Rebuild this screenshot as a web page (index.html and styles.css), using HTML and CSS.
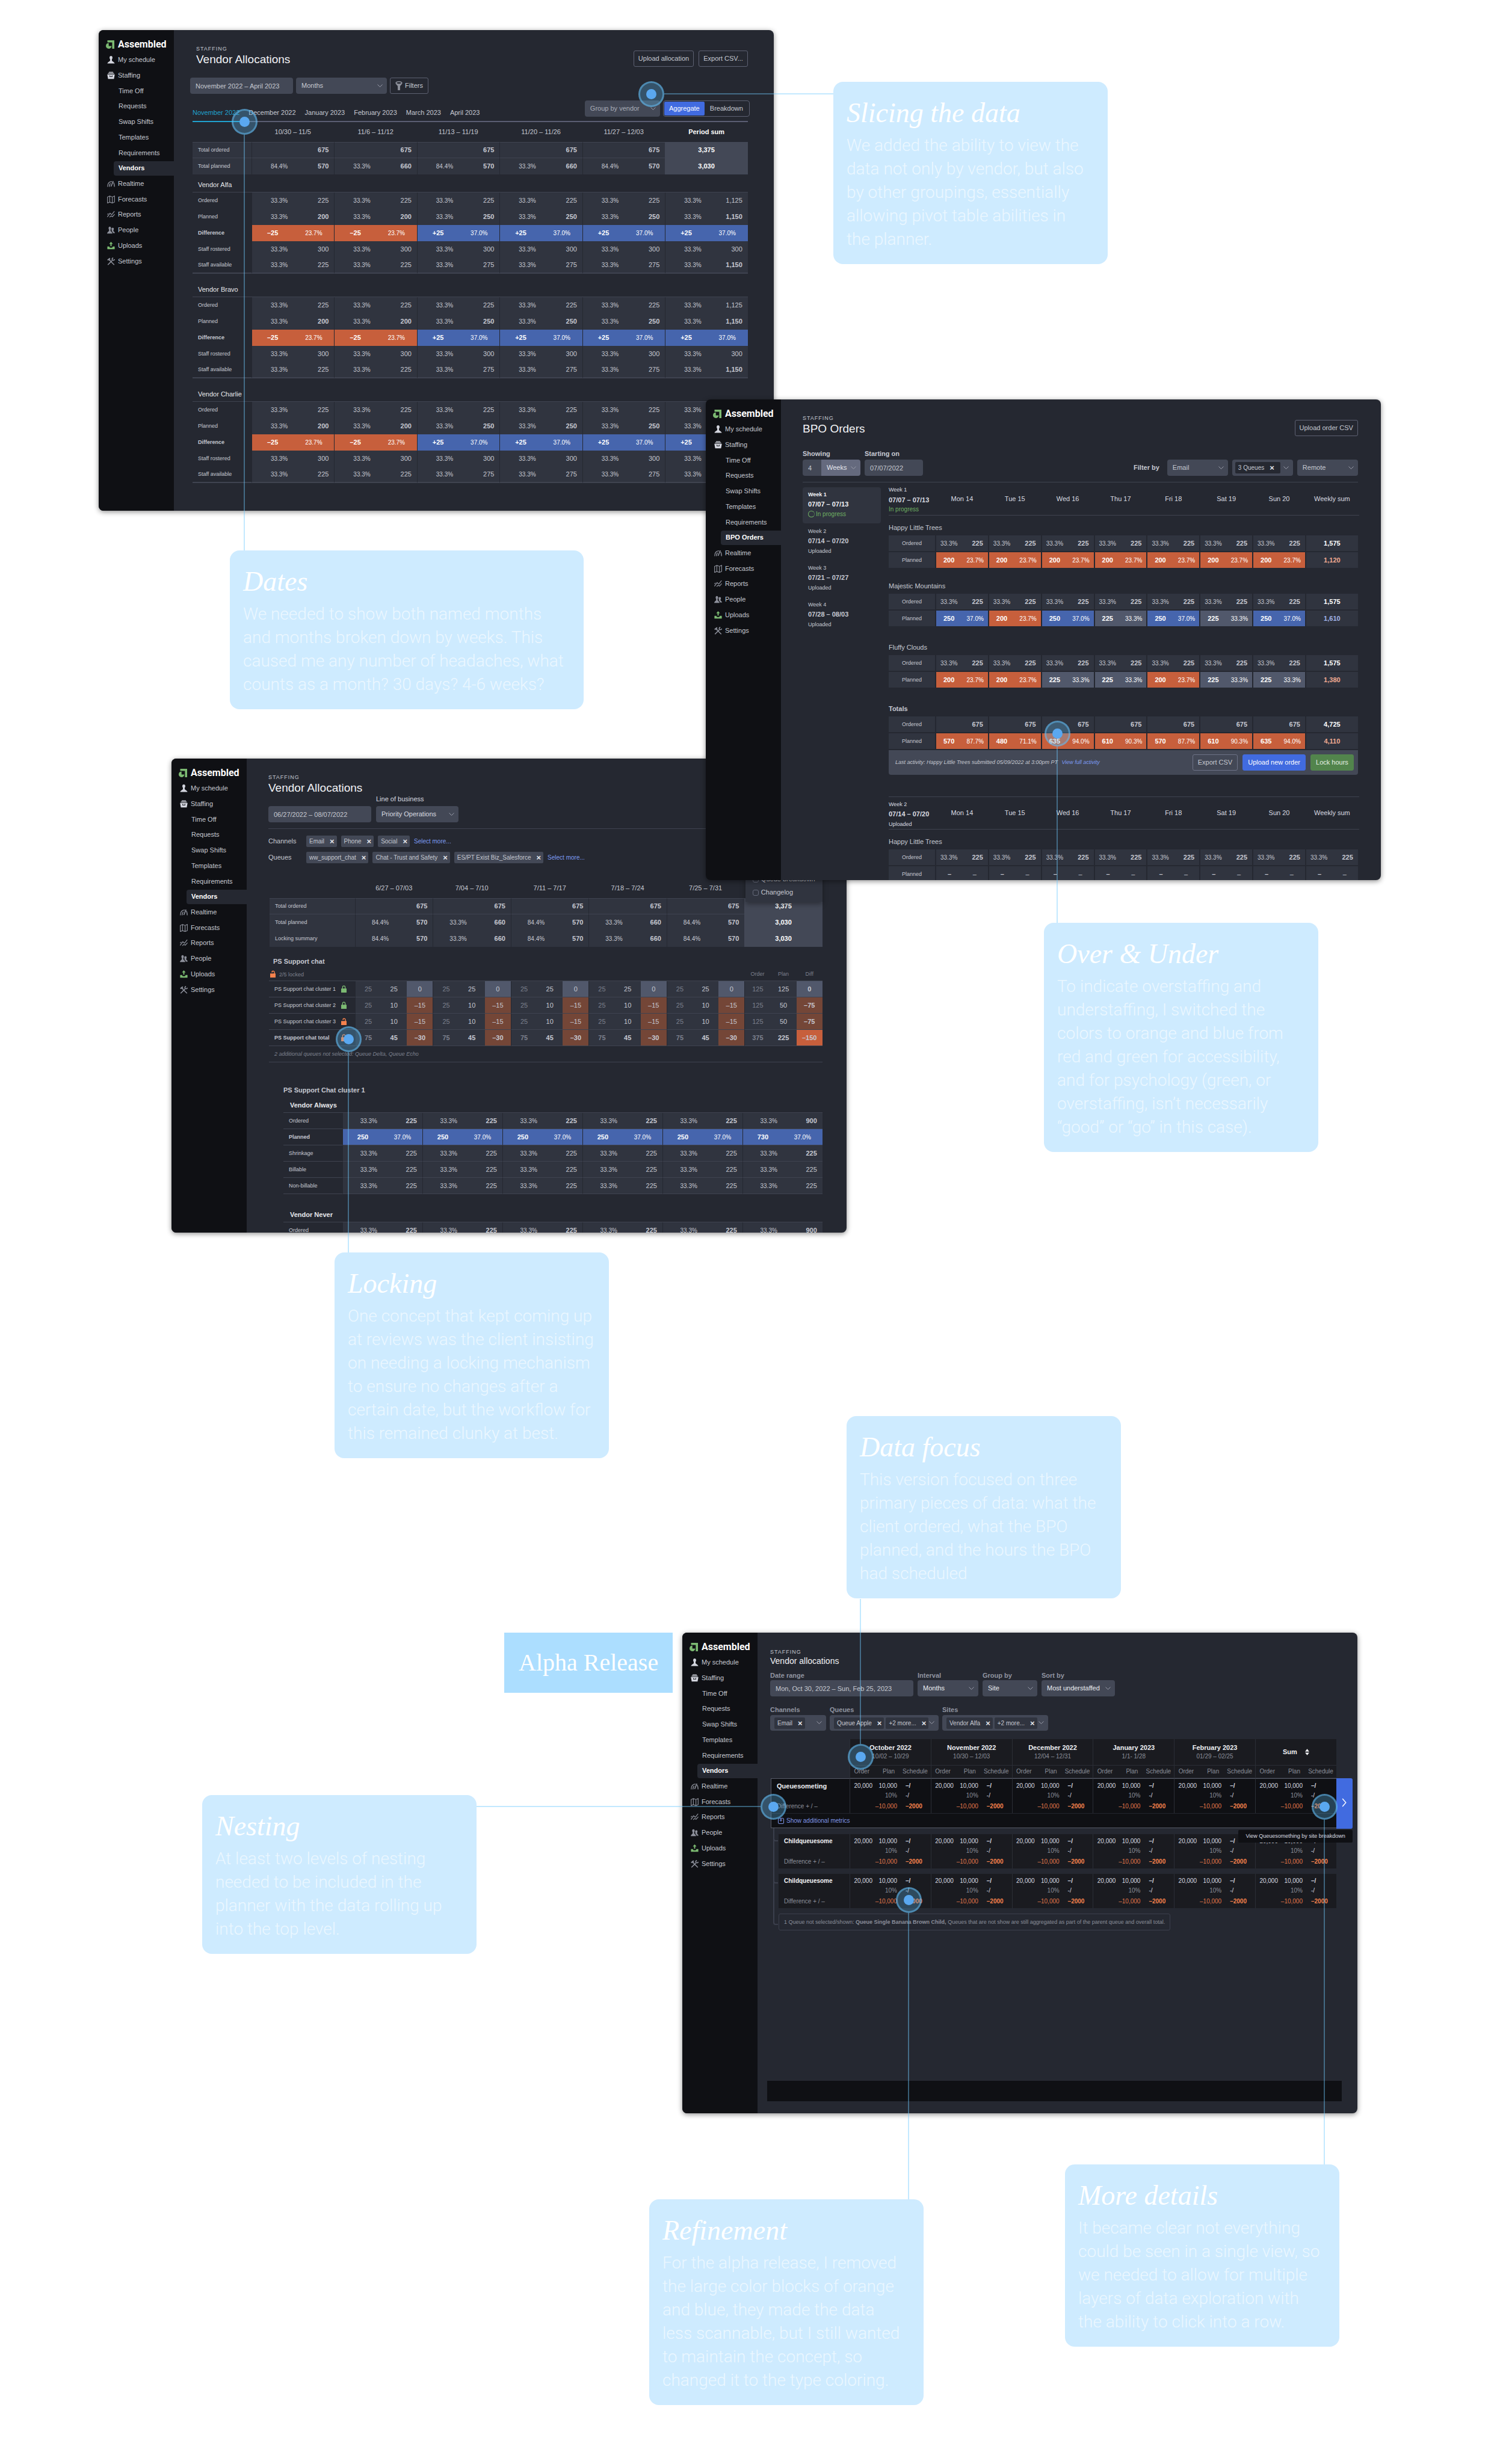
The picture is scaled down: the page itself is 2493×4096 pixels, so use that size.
FILE: index.html
```html
<!DOCTYPE html>
<html lang="en">
<head>
<meta charset="utf-8">
<title>Vendor allocations – design notes</title>
<link rel="stylesheet" href="styles.css">
</head>
<body>
<svg class="sprite" aria-hidden="true">
  <symbol id="logo" viewBox="0 0 14 14"><path d="M2.500 0H14v14h-3.600V3.600H2.500z"/><path d="M0 9.300A5 5 0 0 1 4.700 4.600V9.500h4.700a4.700 4.600 0 0 1-9.400-.2z"/></symbol>
  <symbol id="person" viewBox="0 0 16 16"><path d="M8 0C6 0 5 1.600 5 3.500c0 1.600.5 2.600 1.200 3.300V9c0 2.400-4.500 3-5.700 6.500h15C14.300 12 9.800 11.400 9.800 9V6.800C10.500 6.100 11 5.100 11 3.500 11 1.600 10 0 8 0z"/></symbol>
  <symbol id="box" viewBox="0 0 16 16"><path d="M4 .5h8l.8 1.500H3.200zM2.300 3h11.400l.8 1.700h-13z"/><path fill-rule="evenodd" d="M.3 5.700h15.400L14 15H2zM5 8v2.800h6V8H9.800v1.600H6.200V8z"/></symbol>
  <symbol id="gauge" viewBox="0 0 16 16"><g fill="none" stroke="currentColor" stroke-width="1.600"><path d="M1 14C1 8 3.500 3.500 10 3.200M13 5.500c1.600 2 2 4.500 2 8.500M4.500 14c0-3 .7-5.200 2.500-7"/><path d="M8 13.500 12.500 2.500" stroke-width="2"/></g></symbol>
  <symbol id="map" viewBox="0 0 16 16"><path fill="none" stroke="currentColor" stroke-width="1.400" d="M.8 3 5.400 1l5.200 2 4.600-2v12.500l-4.600 2-5.200-2-4.600 2zM5.400 1v12.500M10.600 3v12.500"/></symbol>
  <symbol id="chart" viewBox="0 0 16 16"><path fill="none" stroke="currentColor" stroke-width="1.500" d="M.5 13 6 5.500l3.500 3L15 1.500M.5 8 3 6M5 13.500l3-2.500 3 1.500 4.500-5"/></symbol>
  <symbol id="people" viewBox="0 0 16 16"><path d="M5.500 1C3.900 1 3 2.300 3 4c0 1.400.4 2.300 1 3v2c0 2-3.400 2.500-4 6h11c-.6-3.500-4-4-4-6V7c.6-.7 1-1.600 1-3 0-1.700-.9-3-2.500-3zM11.500 3c1.500 0 2.300 1 2.300 2.500 0 1.200-.4 2-.9 2.600v1.500c0 1.400 2.700 2 3.100 4.400h-3.800c-.6-2-1.800-3-2.700-4V8c-.3-.6-.5-1.500-.5-2.300C9 4 10 3 11.500 3z"/></symbol>
  <symbol id="upload" viewBox="0 0 16 16"><path d="M8 0l3.800 4.200H9.200V9H6.800V4.200H4.200z"/><path d="M.5 9.500h4C4.500 11.500 6 12 8 12s3.500-.5 3.500-2.500h4V15H.5z"/></symbol>
  <symbol id="tools" viewBox="0 0 16 16"><g fill="none" stroke="currentColor" stroke-width="1.900"><path d="M1.500 15 10.500 6M14.500 15 6.500 7"/><path d="M1 5.500 6 1.500M3.500 3.500l3 3.500" stroke-width="2.600"/><path d="M12.500.8c-2.500.6-3 3-1.500 4.300s4 .8 4.300-1.600"/></g></symbol>
  <symbol id="funnel" viewBox="0 0 12 16"><path fill-rule="evenodd" d="M0 3C0 1.300 2.700 0 6 0s6 1.300 6 3c0 2-2.500 4-3.800 5.500L8 16H4l-.2-7.500C2.500 7 0 5 0 3zm2 0c0 .8 1.800 1.400 4 1.400s4-.6 4-1.400-1.800-1.400-4-1.400S2 2.200 2 3z"/></symbol>
  <symbol id="lock" viewBox="0 0 12 16"><path fill-rule="evenodd" d="M2.300 7V4a3.700 3.700 0 0 1 7.400 0v3H12v9H0V7zM4 7h4V4a2 2 0 0 0-4 0z"/></symbol>
  <symbol id="unlock" viewBox="0 0 12 16"><path d="M3 4.500a3.600 3.600 0 0 1 7.400-.5v3H12v9H0V7h8.600V4a1.900 1.900 0 0 0-3.700.5z"/></symbol>
</svg>

<main class="canvas">
  <section class="window vendors" aria-label="Vendor Allocations">
    <aside class="sidebar" data-active="Vendors"></aside>
    <div class="page">
      <header class="head">
        <div><p class="eyebrow">STAFFING</p><h1 class="title">Vendor Allocations</h1></div>
        <div class="actions"><button class="btn">Upload allocation</button><button class="btn">Export CSV...</button></div>
      </header>
      <div class="toolbar">
        <input class="field range" type="text" aria-label="Date range" value="November 2022 – April 2023">
        <select class="field select interval" aria-label="Interval"><option>Months</option></select>
        <button class="btn filters"><svg><use href="#funnel"/></svg>Filters</button>
      </div>
      <div class="tabbar">
        <nav class="tabs"><a class="on" href="#nov">November 2022</a><a href="#dec">December 2022</a><a href="#jan">January 2023</a><a href="#feb">February 2023</a><a href="#mar">March 2023</a><a href="#apr">April 2023</a></nav>
        <div class="switches">
          <select class="field select grouping" aria-label="Grouping"><option>Group by vendor</option></select>
          <div class="segment"><button class="on">Aggregate</button><button>Breakdown</button></div>
        </div>
      </div>
      <table class="sheet" id="allocations"></table>
    </div>
  </section>

  <section class="window locking" aria-label="Vendor Allocations by queue">
    <aside class="sidebar" data-active="Vendors"></aside>
    <div class="page">
      <header class="head"><div><p class="eyebrow">STAFFING</p><h1 class="title">Vendor Allocations</h1></div></header>
      <div class="lineup">
        <input class="field range" type="text" aria-label="Date range" value="06/27/2022 – 08/07/2022">
        <label class="stack">Line of business<select class="field select business"><option>Priority Operations</option></select></label>
      </div>
      <div class="picks">
        <span>Channels</span>
        <div class="chips"><button class="chip">Email<b>×</b></button><button class="chip">Phone<b>×</b></button><button class="chip">Social<b>×</b></button><a href="#channels">Select more...</a></div>
        <span>Queues</span>
        <div class="chips"><button class="chip">ww_support_chat<b>×</b></button><button class="chip">Chat - Trust and Safety<b>×</b></button><button class="chip">ES/PT Exist Biz_Salesforce<b>×</b></button><a href="#queues">Select more...</a></div>
      </div>
      <div class="summary">
        <table class="sheet" id="summary"></table>
        <div class="menu"><label><input type="checkbox">Queue breakdown</label><label><input type="checkbox">Changelog</label></div>
      </div>
      <h2 class="subtitle">PS Support chat</h2>
      <table class="sheet clusters" id="clusters"></table>
      <h2 class="subtitle inset">PS Support Chat cluster 1</h2>
      <table class="sheet detail" id="detail"></table>
    </div>
  </section>

  <section class="window orders" aria-label="BPO Orders">
    <aside class="sidebar" data-active="BPO Orders"></aside>
    <div class="page">
      <header class="head">
        <div><p class="eyebrow">STAFFING</p><h1 class="title">BPO Orders</h1></div>
        <div class="actions"><button class="btn">Upload order CSV</button></div>
      </header>
      <div class="criteria">
        <div class="stack strong"><label for="count">Showing</label><div class="joined"><input class="field" id="count" type="text" value="4"><select class="field select unit" aria-label="Unit"><option>Weeks</option></select></div></div>
        <label class="stack strong">Starting on<input class="field start" type="text" value="07/07/2022"></label>
        <div class="filterby"><b>Filter by</b>
          <select class="field select" aria-label="Channel"><option>Email</option></select>
          <div class="field select multi"><button class="chip">3 Queues<b>×</b></button></div>
          <select class="field select" aria-label="Site"><option>Remote</option></select>
        </div>
      </div>
      <div class="planner">
        <nav class="weeks">
          <a class="on" href="#w1"><span>Week 1</span><b>07/07 – 07/13</b><em><i class="spinner"></i>In progress</em></a>
          <a href="#w2"><span>Week 2</span><b>07/14 – 07/20</b><em>Uploaded</em></a>
          <a href="#w3"><span>Week 3</span><b>07/21 – 07/27</b><em>Uploaded</em></a>
          <a href="#w4"><span>Week 4</span><b>07/28 – 08/03</b><em>Uploaded</em></a>
        </nav>
        <div class="board">
          <table class="order" id="week1"></table>
          <div class="activity"><p>Last activity: Happy Little Trees submitted 05/09/2022 at 3:00pm PT <a href="#activity">View full activity</a></p><button class="btn">Export CSV</button><button class="btn primary">Upload new order</button><button class="btn go">Lock hours</button></div>
          <table class="order next" id="week2"></table>
        </div>
      </div>
    </div>
  </section>

  <section class="window alpha" aria-label="Vendor allocations alpha">
    <aside class="sidebar" data-active="Vendors"></aside>
    <div class="page">
      <header class="head"><div><p class="eyebrow">STAFFING</p><h1 class="title">Vendor allocations</h1></div></header>
      <div class="controls">
        <label class="stack">Date range<input class="field wide" type="text" value="Mon, Oct 30, 2022 – Sun, Feb 25, 2023"></label>
        <label class="stack">Interval<select class="field select c-interval"><option>Months</option></select></label>
        <label class="stack">Group by<select class="field select c-group"><option>Site</option></select></label>
        <label class="stack">Sort by<select class="field select c-sort"><option>Most understaffed</option></select></label>
      </div>
      <div class="controls second">
        <div class="stack"><span>Channels</span><div class="field select multi m-channels"><button class="chip">Email<b>×</b></button></div></div>
        <div class="stack"><span>Queues</span><div class="field select multi m-queues"><button class="chip">Queue Apple<b>×</b></button><button class="chip">+2 more...<b>×</b></button></div></div>
        <div class="stack"><span>Sites</span><div class="field select multi m-sites"><button class="chip">Vendor Alfa<b>×</b></button><button class="chip">+2 more...<b>×</b></button></div></div>
      </div>
      <div class="metrics">
        <table class="months" id="parent"></table>
        <button class="open" aria-label="View by site"><svg viewBox="0 0 8 16"><path d="M1 1l6 7-6 7"/></svg></button>
        <div class="tree">
          <div class="branch"><table class="months child" id="child1"></table></div>
          <div class="branch"><table class="months child" id="child2"></table></div>
          <div class="branch last"><p class="note">1 Queue not selected/shown: <b>Queue Single Banana Brown Child,</b> Queues that are not show are still aggregated as part of the parent queue and overall total.</p></div>
        </div>
        <div class="tip" role="tooltip">View Queuesomething by site breakdown</div>
      </div>
      <footer class="bar"></footer>
    </div>
  </section>

  <h2 class="stage">Alpha Release</h2>

  <i class="wire w-slicing"></i><i class="wire w-dates"></i><i class="wire w-over"></i><i class="wire w-locking"></i>
  <i class="wire w-focus"></i><i class="wire w-nesting"></i><i class="wire w-refine"></i><i class="wire w-more"></i>
  <i class="pin p-slicing"></i><i class="pin p-dates"></i><i class="pin p-over"></i><i class="pin p-locking"></i>
  <i class="pin p-focus"></i><i class="pin p-nesting"></i><i class="pin p-refine"></i><i class="pin p-more"></i>

  <article class="card slicing"><h3>Slicing the data</h3><p>We added the ability to view the
data not only by vendor, but also
by other groupings, essentially
allowing pivot table abilities in
the planner.</p></article>
  <article class="card dates"><h3>Dates</h3><p>We needed to show both named months
and months broken down by weeks. This
caused me any number of headaches, what
counts as a month? 30 days? 4-6 weeks?</p></article>
  <article class="card over"><h3>Over &amp; Under</h3><p>To indicate overstaffing and
understaffing, I switched the
colors to orange and blue from
red and green for accessibility,
and for psychology (green, or
overstaffing, isn’t necessarily
“good” or “go” in this case).</p></article>
  <article class="card lock"><h3>Locking</h3><p>One concept that kept coming up
at reviews was the client insisting
on needing a locking mechanism
to ensure no changes after a
certain date, but the workflow for
this remained clunky at best.</p></article>
  <article class="card focus"><h3>Data focus</h3><p>This version focused on three
primary pieces of data: what the
client ordered, what the BPO
planned, and the hours the BPO
had scheduled</p></article>
  <article class="card nesting"><h3>Nesting</h3><p>At least two levels of nesting
needed to be included in the
planner with the data rolling up
into the top level.</p></article>
  <article class="card refine"><h3>Refinement</h3><p>For the alpha release, I removed
the large color blocks of orange
and blue, they made the data
less scannable, but I still wanted
to maintain the concept, so
changed it to the type coloring.</p></article>
  <article class="card more"><h3>More details</h3><p>It became clear not everything
could be seen in a single view, so
we needed to allow for multiple
layers of data exploration with
the ability to click into a row.</p></article>
</main>
<script src="script.js"></script>
</body>
</html>
```
FILE: styles.css
```css
:root {
  --ink: #0f1014;
  --deep: #1a1b20;
  --base: #252831;
  --cell: #30343f;
  --field: #434856;
  --neutral: #51586b;
  --line: #3f4350;
  --text: #c6c8d1;
  --dim: #7d818e;
  --orange: #c75f3c;
  --brown: #744637;
  --blue: #4665ad;
  --accent: #416be0;
  --link: #7d9bf2;
  --green: #7cba72;
}
*, *::before, *::after { box-sizing: border-box; }
body { margin: 0; background: #fff; font-family: "Liberation Sans", Arial, sans-serif; font-size: 11px; line-height: 13px; color: var(--text); }
h1, h2, h3, p { margin: 0; font-weight: 400; }
button, input, select { font: inherit; color: inherit; margin: 0; }
a { color: inherit; text-decoration: none; }
.sprite { position: absolute; width: 0; height: 0; }
.canvas { position: relative; min-height: 4096px; overflow: hidden; }

/* windows on the canvas */
.window { position: absolute; display: flex; width: 45%; height: 799px; overflow: hidden; border-radius: 8px; background: var(--base); box-shadow: 0 2px 8px rgba(0, 0, 0, .45); }
.vendors { left: 164px; top: 50px; }
.locking { left: 285px; top: 1261px; height: 788px; }
.orders { left: 1173px; top: 664px; }
.alpha { left: 1134px; top: 2714px; }

.sidebar { flex: 0 0 125px; background: var(--ink); }
.brand { display: flex; align-items: center; gap: 6px; height: 37px; padding: 11px 0 0 12px; font: 700 16px/18px Roboto, sans-serif; color: #fff; }
.brand svg { width: 14px; height: 14px; fill: var(--green); }
.menu-list { display: grid; grid-auto-rows: 1fr; height: 360px; }
.menu-list a { display: flex; align-items: center; gap: 5px; padding-left: 14px; }
.menu-list svg { width: 13px; height: 13px; fill: currentColor; color: #8d909b; }
.menu-list .bright svg { color: #d3d5de; }
.menu-list .fresh svg { color: var(--green); }
.menu-list .sub { padding-left: 33px; }
.menu-list .active { margin: 1px 0 1px 25px; padding-left: 8px; border-radius: 4px 0 0 4px; background: var(--base); color: #fff; font-weight: 700; }

.page { flex: 1; min-width: 0; }
.vendors .page { padding: 25px 43px 0 31px; }
.orders .page { padding: 25px 38px 0 36px; }
.locking .page { padding: 25px 40px 0 36px; }
.alpha .page { padding: 26px 35px 0 21px; }
.head { display: flex; justify-content: space-between; align-items: flex-end; }
.vendors .head > div:first-child { padding-left: 6px; }
.eyebrow { font-size: 9px; line-height: 12px; letter-spacing: 1px; }
.title { font-size: 19px; line-height: 24px; color: #f1f2f5; }
.alpha .title { font-size: 14px; line-height: 19px; }
.actions { display: flex; gap: 8px; }
.btn { height: 27px; padding: 0 8px; border: 1px solid #5d6172; border-radius: 3px; background: none; white-space: nowrap; }
.actions .btn { padding: 0 7px; }
.btn.primary { border-color: var(--accent); background: var(--accent); color: #fff; }
.btn.go { border-color: #52844c; background: #52844c; color: #e6efe4; }
.field { display: block; height: 27px; padding: 0 9px; border: 0; border-radius: 4px; background-color: var(--field); }
.select { appearance: none; padding-right: 22px; background-image: url("data:image/svg+xml,%3Csvg xmlns='http://www.w3.org/2000/svg' width='9' height='6'%3E%3Cpath d='M.5.5l4 4 4-4' fill='none' stroke='%239a9dab'/%3E%3C/svg%3E"); background-repeat: no-repeat; background-position: right 7px center; }

/* vendor allocations */
.toolbar { display: flex; gap: 5px; margin: 18px 0 0 -4px; }
.range { width: 171px; }
.interval { width: 151px; }
.filters { display: flex; align-items: center; gap: 4px; }
.filters svg { width: 12px; height: 15px; fill: #8d909b; }
.tabbar { display: flex; justify-content: space-between; height: 36px; margin-top: 11px; border-bottom: 2px solid #5a5d72; }
.tabs { display: flex; gap: 15px; padding-top: 4px; }
.tabs a { height: 32px; line-height: 32px; white-space: nowrap; }
.tabs .on { border-bottom: 2px solid #20a2cf; color: #20a2cf; }
.switches { display: flex; gap: 5px; margin-right: -3px; }
.grouping { width: 125px; height: 27px; color: #a9acb8; }
.segment { display: flex; width: 144px; height: 27px; padding: 1px; border: 1px solid #5d6172; border-radius: 4px; }
.segment button { flex: 1; padding: 0; border: 0; border-radius: 2px; background: none; }
.segment .on { flex: 0 0 67px; background: var(--accent); color: #fff; }

.sheet { width: 100%; table-layout: fixed; border-spacing: 0; }
.sheet col:first-child { width: 98px; }
.sheet th, .sheet td { height: 27px; padding: 0; font-weight: 400; }
.sheet thead th { height: 33px; }
.sheet thead th.total { color: #fff; font-weight: 700; }
.sheet tbody th { padding-left: 9px; text-align: left; font-size: 9px; }
.sheet td { border-left: 1px solid var(--base); background: var(--cell); }
.sheet .totals th { background: var(--cell); }
.sheet .totals tr:first-child > * { border-top: 1px solid var(--line); border-bottom: 1px solid var(--line); }
.sheet .totals tr > .sum { border-top-color: var(--field); border-bottom-color: var(--field); border-left: 0; background: var(--field); color: #fff; font-weight: 700; text-align: center; }
.sheet .group th.name { height: 30px; padding-bottom: 5px; vertical-align: bottom; font-size: 11px; color: #e6e7eb; border-bottom: 1px solid var(--line); }
.sheet .group + .group th.name { height: 39px; }
.sheet .group tr:last-child > * { border-bottom: 2px solid var(--line); }
.pair { display: grid; grid-template-columns: 1fr 1fr; align-items: center; text-align: right; }
.pair > * { padding-right: 9px; }
.pair small { font-size: 10px; }
.over-cell .pair, .under-cell .pair { text-align: center; color: #fff; }
.over-cell .pair > *, .under-cell .pair > * { padding: 0; }
.sheet .over-cell { background: var(--blue); }
.sheet .under-cell { background: var(--orange); }

/* locking */
.lineup { display: flex; align-items: flex-end; gap: 8px; padding-bottom: 10px; border-bottom: 1px solid var(--line); }
.stack { display: grid; gap: 5px; color: #dadce2; }
.business { width: 137px; }
.picks { display: grid; grid-template-columns: 63px 1fr; gap: 8px 0; align-items: center; margin-top: 11px; }
.chips { display: flex; align-items: center; gap: 7px; }
.chips a, .activity a { color: var(--link); }
.chips a { font-size: 10px; }
.chip { display: flex; align-items: center; height: 19px; gap: 9px; padding: 0 4px 0 5px; border: 0; border-radius: 2px; background: var(--field); font-size: 10px; white-space: nowrap; }
.chip b { font-size: 13px; color: #e3e5ea; }
.summary { position: relative; margin: 25px 0 0 2px; }
#summary col:first-child { width: 142px; }
.menu { position: absolute; right: 0; top: -9px; display: grid; gap: 9px; width: 128px; padding: 4px 12px 9px; background: var(--cell); box-shadow: 0 4px 8px rgba(0, 0, 0, .35); }
.menu label { display: flex; align-items: center; gap: 4px; white-space: nowrap; }
.menu input { appearance: none; width: 10px; height: 10px; border: 1px solid #656a7a; border-radius: 3px; }
.subtitle { margin-top: 17px; padding-left: 8px; font-size: 11px; font-weight: 700; line-height: 14px; }
.subtitle.inset { margin-top: 39px; padding-left: 25px; }
.clusters { margin-left: 1px; width: calc(100% - 1px); }
.clusters col:first-child { width: 143px; }
.clusters thead th { height: 26px; padding-top: 4px; border-bottom: 1px solid var(--line); font-size: 9px; color: var(--dim); }
.clusters thead th:first-child { padding-left: 2px; text-align: left; }
.clusters th svg { width: 9px; height: 12px; fill: var(--green); vertical-align: -2px; }
.clusters thead svg { margin-right: 6px; }
.clusters th svg.open-lock { fill: #f5824d; }
.clusters tbody th svg { float: right; margin-right: 14px; }
.clusters tbody tr > * { border-bottom: 1px solid var(--line); text-align: center; }
.clusters tbody th { border-bottom: 1px solid var(--line); text-align: left; }
.clusters td { border-left: 0; }
.clusters td:nth-child(3n + 2) { border-left: 1px solid var(--base); color: var(--dim); }
.clusters .even { background: var(--neutral); }
.clusters .short { background: var(--brown); }
.clusters .worst { background: var(--orange); }
.clusters .bold > * { font-weight: 700; }
.clusters .strong-cell { font-weight: 700; }
.clusters .remark th { background: none; font-style: italic; color: var(--dim); }
.detail { margin-left: 25px; width: calc(100% - 25px); }
.sheet.detail .group tr > * { border-bottom: 1px solid var(--line); }
.sheet.detail .group th.name { height: 31px; padding-left: 11px; font-weight: 700; }
.sheet.detail .group + .group th.name { height: 47px; }

/* orders */
.criteria { display: flex; align-items: flex-end; gap: 7px; margin-top: 23px; padding-bottom: 10px; border-bottom: 1px solid var(--line); }
.criteria .stack { gap: 3px; color: var(--text); }
.strong { font-weight: 700; }
.strong .field { font-weight: 400; }
.joined { display: flex; }
#count { width: 31px; border-radius: 4px 0 0 4px; }
.unit { width: 65px; border-radius: 0 4px 4px 0; background-color: #656a7e; color: #e6e7ee; }
.start { width: 97px; }
.filterby { display: flex; align-items: center; gap: 7px; margin-left: auto; }
.filterby b { margin-right: 6px; }
.filterby .field { width: 101px; }
.multi { display: flex; align-items: center; gap: 3px; padding: 0 5px; }
.multi .chip { background: var(--cell); }
.filterby .chip { background: var(--base); }
.planner { display: grid; grid-template-columns: 130px 1fr; gap: 13px; }
.weeks { display: grid; align-content: start; gap: 1px; padding-top: 8px; }
.weeks a { display: grid; height: 60px; padding: 5px 9px 8px; border-radius: 4px; font-size: 9px; line-height: 14px; }
.weeks b { font-size: 11px; line-height: 18px; }
.weeks em, .order em { font-style: normal; }
.weeks em { display: flex; align-items: center; gap: 2px; }
.weeks .on { background: var(--cell); color: #f1f2f5; }
.weeks .on span { font-weight: 700; }
.weeks .on em, .order .live { font-size: 10px; color: #6fb163; }
.spinner { width: 11px; height: 11px; border: 1px solid #6fb163; border-right-style: dotted; border-radius: 50%; }
.board { min-width: 0; margin-right: -2px; }
.order { width: 100%; table-layout: fixed; border-spacing: 0; }
.order col:first-child { width: 79px; }
.order thead th { height: 55px; padding: 0 2px 0 0; border-bottom: 1px solid var(--line); font-weight: 400; color: #dadce2; }
.order thead th:first-child { display: grid; height: 55px; padding-top: 4px; overflow: visible; text-align: left; white-space: nowrap; font-size: 9px; line-height: 16px; }
.order thead b { font-size: 11px; }
.order .name { height: 33px; padding: 0 0 6px; vertical-align: bottom; text-align: left; font-weight: 400; }
.order .mid .name { height: 41px; }
.order .far .name { height: 46px; }
.order .closing .name { font-weight: 700; }
.order tbody th[scope=row], .order td { height: 28px; padding: 0; border: solid var(--base); border-width: 0 2px 2px 0; background: var(--cell); }
.order tbody th[scope=row] { font-size: 9px; font-weight: 400; }
.duo { display: flex; justify-content: space-between; align-items: center; padding: 0 8px 0 7px; }
.duo small { font-size: 10px; }
.order .tone { color: #fff; }
.order .tone .duo { padding: 0 7px 0 12px; }
.order .dash .duo { padding: 0 19px; }
.order .o { background: var(--orange); }
.order .b { background: var(--blue); }
.order .n { background: var(--neutral); }
.order .sum { text-align: center; font-weight: 700; color: #fff; }
.order .sum.low { color: #efa991; }
.order .sum.high { color: #a2b3e8; }
.activity { display: flex; align-items: center; gap: 8px; height: 41px; margin-right: 2px; padding: 0 7px 0 11px; border-radius: 0 0 4px 4px; background: var(--field); }
.activity p { margin-right: auto; font-size: 9px; font-style: italic; white-space: nowrap; }
.activity a { margin-left: 4px; }
.activity .btn { padding: 0 8px; }
.activity .btn:not(.primary):not(.go) { border-color: #6d7286; }
.next { margin-top: 36px; }
.next thead th { border-top: 1px solid var(--line); }

/* alpha */
.controls { display: flex; align-items: flex-end; gap: 7px; margin-top: 8px; font-weight: 700; }
.controls .stack { gap: 1px; color: #9094a0; }
.controls .field { font-weight: 400; color: #eceef2; }
.controls .wide { width: 238px; color: var(--text); }
.c-interval { width: 101px; }
.c-group { width: 91px; }
.c-sort { width: 122px; }
.controls.second { gap: 6px; margin-top: 16px; }
.controls.second .stack { gap: 2px; }
.controls .multi { height: 26px; padding: 0 7px; color: var(--text); }
.m-channels { width: 93px; }
.m-queues { width: 181px; }
.m-sites { width: 176px; }
.metrics { position: relative; margin: 14px 0 0 1px; }
.months { width: 100%; table-layout: fixed; border-spacing: 0; }
.months col:first-child { width: 131px; }
.months.child col:first-child { width: 118px; }
.months th, .months td { padding: 0; font-weight: 400; vertical-align: top; }
.months thead td { background: none; }
.months thead th { height: 44px; vertical-align: middle; background: var(--deep); border-left: 1px solid #2b2e36; border-bottom: 1px solid #2b2e36; font-weight: 700; color: #eceef2; }
.months thead small { display: block; margin-top: 1px; font-size: 10px; font-weight: 400; color: #8b8f9a; }
.months thead tr + tr th { height: 21px; font-size: 10px; font-weight: 400; color: #8b8f9a; }
.trio { display: grid; grid-template-columns: 37px 41px 1fr; text-align: right; line-height: 16px; font-size: 10px; }
thead .trio span:nth-child(1) { padding-right: 5px; }
thead .trio span:nth-child(2) { padding-right: 4px; }
thead .trio span:nth-child(3) { padding-right: 5px; }
tbody .trio { padding-top: 4px; color: #d8dae0; }
tbody .trio span:nth-child(3n) { padding-left: 14px; text-align: left; }
.trio .share { color: #8b8f9a; }
.trio .gap { margin-top: 2px; color: #e0764a; }
.trio .gap.hot { color: #f5824d; font-weight: 700; }
.months tbody td, .months tbody th { height: 57px; border-left: 1px solid #2b2e36; background: var(--deep); }
.months tbody th { border-left: 0; text-align: left; }
.label { display: flex; flex-direction: column; justify-content: space-between; height: 54px; padding: 4px 0 0 9px; line-height: 16px; font-size: 10px; color: #8b8f9a; }
.label b { color: #f1f2f5; }
.months .parent th, .months .parent td { height: 58px; border-top: 1px solid #565a67; background: var(--ink); }
.parent .label b { font-size: 11px; }
.months .parent .extra th { height: 25px; border: 1px solid #565a67; border-top-color: #22252d; border-right: 0; padding: 4px 0 0 11px; font-size: 10px; line-height: 16px; }
.months .parent tr:first-child th { border-left: 1px solid #565a67; }
.extra a { display: flex; align-items: center; gap: 4px; color: #7f95e6; }
.extra i { width: 10px; height: 10px; border: 1px solid currentColor; border-radius: 2px; font: 700 9px/7px "Liberation Sans", sans-serif; text-align: center; }
.sort svg { width: 7px; height: 11px; margin-left: 10px; fill: #f1f2f5; vertical-align: -2px; }
.open { position: absolute; right: -27px; top: 65px; width: 27px; height: 84px; padding: 0; border: 0; border-radius: 0 3px 3px 0; background: var(--accent); }
.open svg { width: 8px; height: 15px; fill: none; stroke: #fff; stroke-width: 1.500; }
.tip { position: absolute; right: -27px; top: 151px; padding: 4px 12px; border-radius: 2px; background: var(--ink); font-size: 9px; color: #dadce2; }
.tree { padding: 10px 0 0 13px; }
.branch { position: relative; margin-bottom: 9px; }
.branch::before { content: ""; position: absolute; left: -9px; top: -10px; width: 8px; height: 22px; border: solid #3b3f4c; border-width: 0 0 2px 2px; border-radius: 0 0 0 4px; }
.branch + .branch::before { top: -60px; height: 76px; }
.branch.last::before { height: 79px; }
.note { display: inline-block; height: 28px; padding: 0 8px; border: 1px solid #3b3f4c; border-radius: 3px; font-size: 9px; line-height: 26px; color: #8b8f9a; white-space: nowrap; }
.bar { height: 34px; margin: 250px -9px 0 -5px; background: var(--ink); }

/* notes, wires and pins */
.stage { position: absolute; left: 838px; top: 2714px; padding: 0 24px; background: #acdeff; font: 400 40px/100px "Liberation Serif", serif; color: #fff; }
.card { position: absolute; width: 456px; padding: 22px 20px 22px 22px; border-radius: 16px; background: #ceebff; }
.card h3 { padding-bottom: 4px; font: italic 400 46px/60px "Liberation Serif", serif; color: #fff; }
.card p { font: 300 28px/39px Roboto, sans-serif; color: #ebf7ff; white-space: pre-line; }
.slicing { left: 1385px; top: 136px; }
.dates { left: 382px; top: 915px; width: 588px; }
.over { left: 1735px; top: 1534px; }
.lock { left: 556px; top: 2082px; }
.focus { left: 1407px; top: 2354px; }
.nesting { left: 336px; top: 2984px; }
.refine { left: 1079px; top: 3656px; }
.more { left: 1770px; top: 3598px; }
.wire { position: absolute; width: 2px; background: rgba(112, 203, 255, .42); }
.w-slicing { left: 1104px; top: 155px; width: 281px; height: 2px; }
.w-dates { left: 405px; top: 224px; height: 691px; }
.w-over { left: 1756px; top: 1241px; height: 293px; }
.w-locking { left: 578px; top: 1749px; height: 333px; }
.w-focus { left: 1429px; top: 2658px; height: 241px; }
.w-nesting { left: 792px; top: 3002px; width: 472px; height: 2px; }
.w-refine { left: 1509px; top: 3180px; height: 476px; }
.w-more { left: 2200px; top: 3025px; height: 573px; }
.pin { position: absolute; display: grid; place-items: center; width: 43px; height: 43px; border: 3px solid rgba(100, 190, 245, .5); border-radius: 50%; background: rgba(92, 187, 240, .3); }
.pin::after { content: ""; width: 17px; height: 17px; border-radius: 50%; background: #5aa8f0; }
.p-slicing { left: 1061px; top: 135px; }
.p-dates { left: 385px; top: 181px; }
.p-over { left: 1736px; top: 1198px; }
.p-locking { left: 558px; top: 1706px; }
.p-focus { left: 1409px; top: 2899px; }
.p-nesting { left: 1264px; top: 2982px; }
.p-refine { left: 1489px; top: 3137px; }
.p-more { left: 2180px; top: 2982px; }
```
FILE: script.js
```js
const byId = (id) => document.getElementById(id);
const icon = (name, cls = "") => `<svg class="${cls}"><use href="#${name}"/></svg>`;
const times = (n, fn) => Array.from({ length: n }, (_, i) => fn(i)).join("");
const cols = (n) => `<colgroup><col>${times(n, () => "<col>")}</colgroup>`;

/* Sidebar */
document.querySelectorAll(".sidebar").forEach((bar) => {
  const active = bar.dataset.active;
  const items = [
    ["My schedule", "person", "bright"], ["Staffing", "box", "bright"],
    ["Time Off"], ["Requests"], ["Swap Shifts"], ["Templates"], ["Requirements"], [active],
    ["Realtime", "gauge"], ["Forecasts", "map"], ["Reports", "chart"], ["People", "people"],
    ["Uploads", "upload", "fresh"], ["Settings", "tools"],
  ];
  bar.innerHTML = `<div class="brand">${icon("logo")}Assembled</div><nav class="menu-list">` +
    items.map(([text, pic, cls = ""]) => {
      const kind = pic ? cls : text === active ? "active" : "sub";
      return `<a class="${kind}" href="#nav">${pic ? icon(pic) : ""}${text}</a>`;
    }).join("") + "</nav>";
});

/* Share and hours in one cell; a leading * marks a bold value */
const value = (v) => (v[0] === "*" ? `<b>${v.slice(1)}</b>` : `<span>${v}</span>`);
const pair = (share, hours) => `<td><div class="pair"><small>${share}</small>${value(hours)}</div></td>`;
const diff = (hours, share) =>
  `<td class="${share === "23.7%" ? "under" : "over"}-cell"><div class="pair"><b>${hours}</b><small>${share}</small></div></td>`;
const row = (label, cells, bold) => `<tr><th scope="row">${bold ? `<b>${label}</b>` : label}</th>${cells}</tr>`;
const shares = (list) => list.map((v) => pair("33.3%", v)).join("");
const weekHead = (list, total) =>
  `<thead><tr><th></th>${list.map((d) => `<th>${d}</th>`).join("")}<th class="total">${total}</th></tr></thead>`;
const ordered = row("Total ordered", times(5, () => pair("", "*675")) + '<td class="sum">3,375</td>');
const planned = (label) =>
  row(label, times(5, (i) => (i % 2 ? pair("33.3%", "*660") : pair("84.4%", "*570"))) + '<td class="sum">3,030</td>');

/* Vendor allocations */
const vendor = (name) => `<tbody class="group"><tr><th class="name" colspan="7">${name}</th></tr>` +
  row("Ordered", shares(["225", "225", "225", "225", "225", "1,125"])) +
  row("Planned", shares(["*200", "*200", "*250", "*250", "*250", "*1,150"])) +
  row("Difference", times(2, () => diff("–25", "23.7%")) + times(4, () => diff("+25", "37.0%")), true) +
  row("Staff rostered", shares(Array(6).fill("300"))) +
  row("Staff available", shares(["225", "225", "275", "275", "275", "*1,150"])) + "</tbody>";
byId("allocations").innerHTML = cols(6) +
  weekHead(["10/30 – 11/5", "11/6 – 11/12", "11/13 – 11/19", "11/20 – 11/26", "11/27 – 12/03"], "Period sum") +
  `<tbody class="totals">${ordered}${planned("Total planned")}</tbody>` +
  ["Vendor Alfa", "Vendor Bravo", "Vendor Charlie"].map(vendor).join("");

/* Locking */
byId("summary").innerHTML = cols(6) +
  weekHead(["6/27 – 07/03", "7/04 – 7/10", "7/11 – 7/17", "7/18 – 7/24", "7/25 – 7/31"], "") +
  `<tbody class="totals">${ordered}${planned("Total planned")}${planned("Locking summary")}</tbody>`;
const cluster = (label, lock, week, sum, tone, sumTone, cls = "") =>
  `<tr class="${cls}"><th scope="row">${icon(lock, lock === "unlock" || cls ? "open-lock" : "")}${label}</th>` +
  times(5, () => `<td>${week[0]}</td><td>${week[1]}</td><td class="${tone}">${week[2]}</td>`) +
  `<td>${sum[0]}</td><td>${sum[1]}</td><td class="strong-cell ${sumTone}">${sum[2]}</td></tr>`;
byId("clusters").innerHTML = cols(18) +
  `<thead><tr><th>${icon("unlock", "open-lock")}2/5 locked</th><th colspan="15"></th><th>Order</th><th>Plan</th><th>Diff</th></tr></thead><tbody>` +
  cluster("PS Support chat cluster 1", "lock", [25, 25, 0], [125, 125, 0], "even", "even") +
  cluster("PS Support chat cluster 2", "lock", [25, 10, "–15"], [125, 50, "–75"], "short", "short") +
  cluster("PS Support chat cluster 3", "unlock", [25, 10, "–15"], [125, 50, "–75"], "short", "short") +
  cluster("PS Support chat total", "lock", [75, 45, "–30"], [375, 225, "–150"], "short", "worst", "bold") +
  '<tr class="remark"><th colspan="19">2 additional queues not selected: Queue Delta, Queue Echo</th></tr></tbody>';
const orderedDetail = row("Ordered", shares(Array(5).fill("*225").concat("*900")));
byId("detail").innerHTML = cols(6) +
  '<tbody class="group"><tr><th class="name" colspan="7">Vendor Always</th></tr>' + orderedDetail +
  row("Planned", times(5, () => diff("250", "37.0%")) + diff("730", "37.0%"), true) +
  row("Shrinkage", shares(["225", "225", "225", "225", "225", "*225"])) +
  row("Billable", shares(Array(6).fill("225"))) +
  row("Non-billable", shares(Array(6).fill("225"))) + "</tbody>" +
  '<tbody class="group"><tr><th class="name" colspan="7">Vendor Never</th></tr>' + orderedDetail + "</tbody>";

/* Orders */
const days = ["Mon 14", "Tue 15", "Wed 16", "Thu 17", "Fri 18", "Sat 19", "Sun 20", "Weekly sum"];
const orderHead = (week, dates, status, cls) =>
  cols(8) + `<thead><tr><th>${week}<b>${dates}</b><em class="${cls}">${status}</em></th>${days.map((d) => `<th>${d}</th>`).join("")}</tr></thead>`;
const duo = (a, b, cls = "") => `<td class="${cls}"><div class="duo">${a}${b}</div></td>`;
const plain = (share, hours) => duo(`<small>${share}</small>`, `<b>${hours}</b>`);
const tone = { o: "23.7%", b: "37.0%", n: "33.3%" };
const hours = { o: 200, b: 250, n: 225 };
const orderRows = (name, cls, top, sum, plan, total, totalCls) =>
  `<tbody class="${cls}"><tr><th class="name" colspan="9">${name}</th></tr>` +
  `<tr><th scope="row">Ordered</th>${top}<td class="sum">${sum}</td></tr>` +
  `<tr><th scope="row">Planned</th>${plan}<td class="sum ${totalCls}">${total}</td></tr></tbody>`;
const plan = (code) => [...code].map((k) => duo(`<b>${hours[k]}</b>`, `<small>${tone[k]}</small>`, `tone ${k}`)).join("");
const usual = times(7, () => plain("33.3%", 225));
const closing = [[570, 87.7], [480, 71.1], [635, "94.0"], [610, 90.3], [570, 87.7], [610, 90.3], [635, "94.0"]]
  .map(([h, s]) => duo(`<b>${h}</b>`, `<small>${s}%</small>`, "tone o")).join("");
byId("week1").innerHTML = orderHead("Week 1", "07/07 – 07/13", "In progress", "live") +
  orderRows("Happy Little Trees", "", usual, "1,575", plan("ooooooo"), "1,120", "low") +
  orderRows("Majestic Mountains", "mid", usual, "1,575", plan("bobnbnb"), "1,610", "high") +
  orderRows("Fluffy Clouds", "far", usual, "1,575", plan("oonnonn"), "1,380", "low") +
  orderRows("Totals", "far closing", times(7, () => plain("", 675)), "4,725", closing, "4,110", "low");
byId("week2").innerHTML = orderHead("Week 2", "07/14 – 07/20", "Uploaded", "") +
  '<tbody><tr><th class="name" colspan="9">Happy Little Trees</th></tr>' +
  `<tr><th scope="row">Ordered</th>${times(8, () => plain("33.3%", 225))}</tr>` +
  `<tr><th scope="row">Planned</th>${times(8, () => duo("<b>–</b>", "<span>–</span>", "dash"))}</tr></tbody>`;

/* Alpha */
const trio = `<td><div class="trio"><span>20,000</span><span>10,000</span><span><b>–/</b></span>` +
  `<span></span><span class="share">10%</span><span>-/</span>` +
  `<span></span><span class="gap">–10,000</span><span class="gap hot">–2000</span></div></td>`;
const monthRow = (name) =>
  `<tr><th scope="row"><div class="label"><b>${name}</b><span>Difference + / –</span></div></th>${times(6, () => trio)}</tr>`;
const months = [["October 2022", "10/02 – 10/29"], ["November 2022", "10/30 – 12/03"], ["December 2022", "12/04 – 12/31"],
  ["January 2023", "1/1- 1/28"], ["February 2023", "01/29 – 02/25"]];
byId("parent").innerHTML = cols(6) +
  `<thead><tr><td></td>${months.map(([m, r]) => `<th>${m}<small>${r}</small></th>`).join("")}` +
  '<th class="sort">Sum <svg viewBox="0 0 8 12"><path d="M4 0l4 5H0zM4 12l4-5H0z"/></svg></th></tr>' +
  `<tr><td></td>${times(6, () => '<th><div class="trio"><span>Order</span><span>Plan</span><span>Schedule</span></div></th>')}</tr></thead>` +
  `<tbody class="parent">${monthRow("Queuesometing")}` +
  '<tr class="extra"><th colspan="7"><a href="#metrics"><i>+</i>Show additional metrics</a></th></tr></tbody>';
["child1", "child2"].forEach((id) => {
  byId(id).innerHTML = `${cols(6)}<tbody>${monthRow("Childqueuesome")}</tbody>`;
});
```
